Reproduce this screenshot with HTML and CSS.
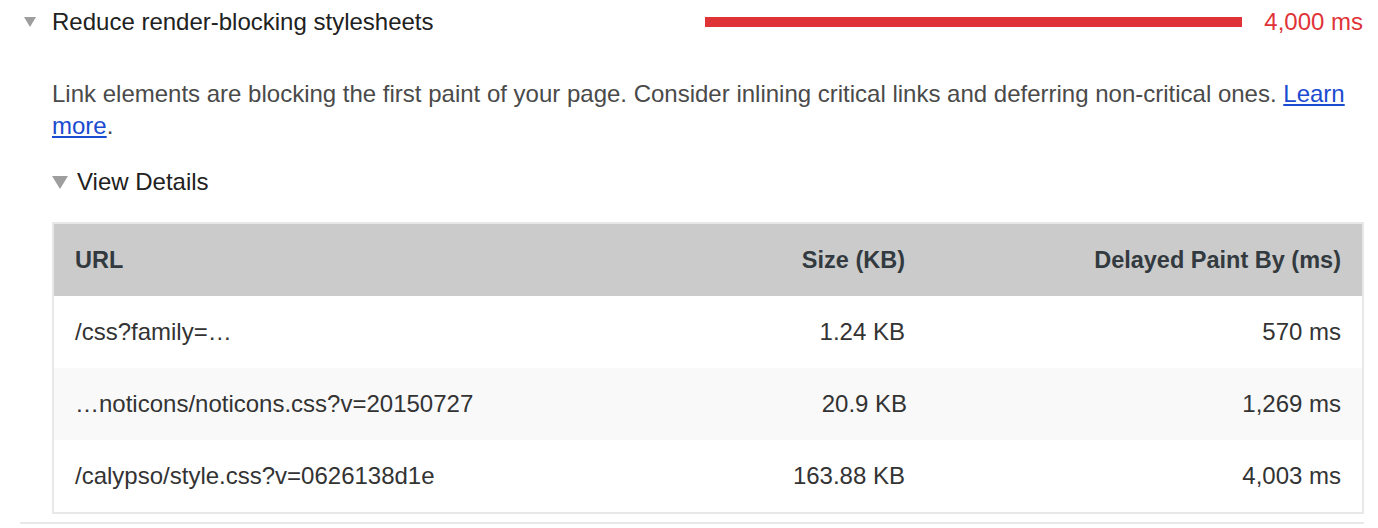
FILE: index.html
```html
<!DOCTYPE html>
<html>
<head>
<meta charset="utf-8">
<link rel="stylesheet" href="styles.css">
</head>
<body>
<div class="audit">
  <div class="audit-head">
    <span class="tri tri-main"></span>
    <span class="title">Reduce render-blocking stylesheets</span>
    <div class="metric">
      <div class="bar"></div>
      <span class="metric-val">4,000 ms</span>
    </div>
  </div>
  <div class="audit-body">
    <p class="desc">Link elements are blocking the first paint of your page. Consider inlining critical links and deferring non-critical ones. <a href="#">Learn more</a>.</p>
    <div class="details-head">
      <span class="tri tri-details"></span>
      <span class="details-label">View Details</span>
    </div>
    <div class="table">
      <div class="row head">
        <div class="cell">URL</div>
        <div class="cell num">Size (KB)</div>
        <div class="cell num">Delayed Paint By (ms)</div>
      </div>
      <div class="row">
        <div class="cell">/css?family=…</div>
        <div class="cell num">1.24 KB</div>
        <div class="cell num">570 ms</div>
      </div>
      <div class="row alt">
        <div class="cell">…noticons/noticons.css?v=20150727</div>
        <div class="cell num">20.9 KB</div>
        <div class="cell num">1,269 ms</div>
      </div>
      <div class="row">
        <div class="cell">/calypso/style.css?v=0626138d1e</div>
        <div class="cell num">163.88 KB</div>
        <div class="cell num">4,003 ms</div>
      </div>
    </div>
  </div>
  <div class="divider"></div>
</div>
</body>
</html>
```

FILE: styles.css
```css
html, body {
  margin: 0;
  padding: 0;
  background: #ffffff;
}
body {
  font-family: "Liberation Sans", Arial, sans-serif;
  font-size: 24px;
  color: #333333;
  width: 1378px;
  height: 528px;
  overflow: hidden;
}
.audit {
  display: flex;
  flex-direction: column;
}
.audit-head {
  display: flex;
  align-items: center;
  height: 44px;
  padding-left: 24px;
  padding-right: 15px;
}
.tri {
  display: inline-block;
  width: 0;
  height: 0;
  border-style: solid;
  border-color: #9e9e9e transparent transparent transparent;
}
.tri-main {
  border-width: 10px 6px 0 6px;
  margin-right: 16px;
}
.title {
  color: #212121;
  flex: 1;
}
.metric {
  display: flex;
  align-items: center;
  gap: 22px;
}
.bar {
  width: 537px;
  height: 10px;
  background: #df3338;
}
.metric-val {
  color: #df3338;
}
.audit-body {
  padding-left: 52px;
  padding-right: 14px;
}
.desc {
  margin: 34px 0 0 0;
  line-height: 32px;
  color: #4a4a4a;
}
.desc a {
  color: #1a4bd0;
  text-decoration: underline;
}
.details-head {
  display: flex;
  align-items: center;
  height: 32px;
  margin-top: 24px;
}
.tri-details {
  border-width: 13px 8px 0 8px;
  margin-right: 9px;
}
.details-label {
  color: #212121;
}
.table {
  margin-top: 24px;
  border: 2px solid #e8e8e8;
}
.row {
  display: grid;
  grid-template-columns: 1fr 1fr 1fr;
  height: 72px;
  align-items: center;
}
.row.head {
  background: #cbcbcb;
  font-weight: bold;
  font-size: 23.5px;
  color: #333a3f;
}
.row.alt {
  background: #f9f9f9;
}
.cell {
  padding: 0 21px;
  white-space: nowrap;
}
.cell.num {
  text-align: right;
}
.divider {
  margin: 8px 14px 0 20px;
  height: 2px;
  background: #e8e8e8;
}
```
